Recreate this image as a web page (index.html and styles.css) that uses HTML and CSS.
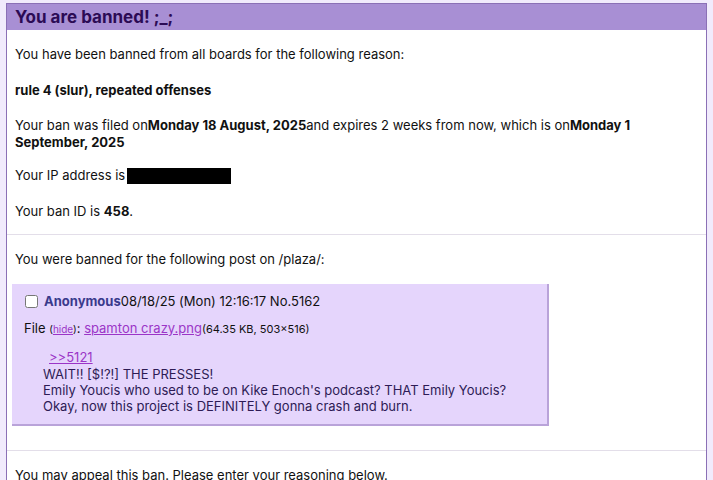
FILE: index.html
```html
<!DOCTYPE html>
<html lang="en">
<head>
  <meta charset="UTF-8">
  <title>Banned</title>
  <link rel="stylesheet" href="styles.css">
</head>
<body>
  <div class="ban-box">
    <h2 class="ban-title">You are banned! ;_;</h2>

    <div class="ban-section">
      <p>You have been banned from all boards for the following reason:</p>
      <p class="reason">rule 4 (slur), repeated offenses</p>
      <p class="two-line">Your ban was filed on<b>Monday 18 August, 2025</b>and expires 2 weeks from now, which is on<b>Monday 1 September, 2025</b></p>
      <p>Your IP address is<span class="redacted"></span></p>
      <p>Your ban ID is <b>458</b>.</p>
    </div>

    <div class="ban-section">
      <p class="post-intro">You were banned for the following post on /plaza/:</p>
      <div class="post">
        <div class="post-head">
          <input type="checkbox">
          <span class="name">Anonymous</span>08/18/25 (Mon) 12:16:17 No.5162
        </div>
        <div class="file-info">
          File <small>(<a href="#">hide</a>)</small>: <a href="#">spamton crazy.png</a><span class="file-meta">(64.35 KB, 503×516)</span>
        </div>
        <blockquote class="post-body">
          <a href="#" class="quote-link">&gt;&gt;5121</a>
          WAIT!! [$!?!] THE PRESSES!<br>
          Emily Youcis who used to be on Kike Enoch's podcast? THAT Emily Youcis?<br>
          Okay, now this project is DEFINITELY gonna crash and burn.
        </blockquote>
      </div>
    </div>

    <div class="ban-section">
      <p>You may appeal this ban. Please enter your reasoning below.</p>
    </div>
  </div>
</body>
</html>
```

FILE: styles.css
```css
body {
  margin: 0;
  background: #f1ebfc;
  font-family: Inter, "Noto Sans", sans-serif;
  font-size: 13px;
  color: #111;
}
.ban-box {
  margin: 3px 6px 0 6px;
  border: 1px solid #8b70b6;
  background: white;
}
.ban-title {
  margin: 0;
  padding: 4px 8px 3px;
  height: 19px;
  line-height: 19px;
  font-size: 17px;
  font-weight: 700;
  color: #2c0b55;
  background: #a88fd4;
}
.ban-section {
  padding: 15px 8px 14px;
  border-bottom: 1px solid #e3dee9;
}
.ban-section p {
  margin: 0 0 18px;
  line-height: 18px;
}
.ban-section p:last-child {
  margin-bottom: 0;
}
.reason {
  font-weight: 700;
}
.ban-section .two-line {
  line-height: 17px;
  margin-bottom: 15px;
}
.ban-section .post-intro {
  margin-bottom: 16px;
}
.redacted {
  display: inline-block;
  width: 104px;
  height: 16px;
  margin-left: 2px;
  background: #000;
  vertical-align: -4px;
}
.post {
  width: 519px;
  margin: 0 0 10px -3px;
  padding: 8px 8px 10px;
  background: #e5d5fc;
  border-right: 2px solid #b9a3d9;
  border-bottom: 2px solid #b9a3d9;
  color: #2d1b55;
}
.post-head {
  display: flex;
  align-items: center;
  height: 18px;
  color: #111;
}
.post-head input {
  margin: 0 6px 0 5px;
  width: 13px;
  height: 13px;
}
.name {
  font-weight: 700;
  color: #3a3a8c;
}
.file-info {
  margin: 10px 0 0 4px;
  line-height: 16px;
  font-size: 13px;
  color: #111;
}
.file-info small {
  font-size: 10px;
}
.file-info a, .quote-link {
  color: #9b35c7;
}
.file-meta {
  font-size: 11px;
}
.post-body {
  margin: 11px 0 0 23px;
  line-height: 16px;
}
.quote-link {
  display: block;
  margin-left: 6px;
  line-height: 18px;
}
```
